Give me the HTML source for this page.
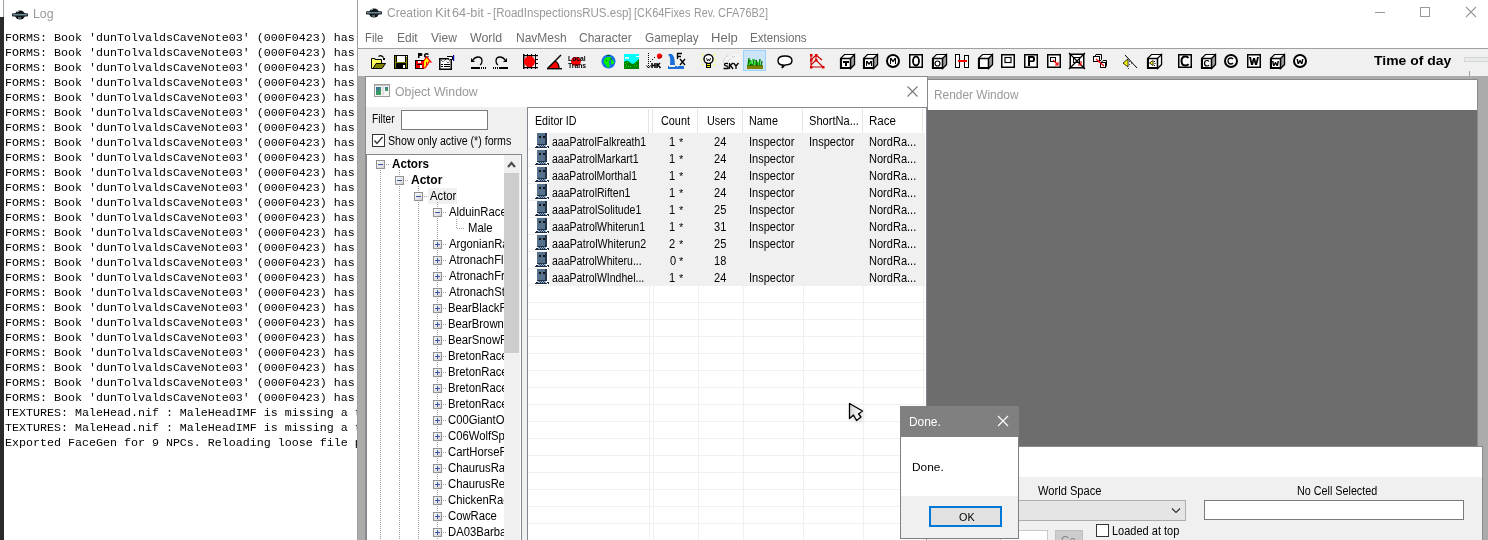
<!DOCTYPE html>
<html><head><meta charset="utf-8"><style>
html,body{margin:0;padding:0;}
body{width:1488px;height:540px;overflow:hidden;position:relative;background:#ababab;font-family:"Liberation Sans",sans-serif;}
.a{position:absolute;}
.t{position:absolute;white-space:pre;line-height:1;}
#logtxt{position:absolute;left:5px;top:31px;will-change:transform;font-family:"Liberation Mono",monospace;font-size:11.67px;line-height:15px;color:#000;white-space:pre;margin:0;}
</style></head><body>
<div class="a" style="left:0;top:0;width:1488px;height:540px;overflow:hidden;will-change:transform">
<div class="a" style="left:0;top:0;width:357px;height:540px;background:#fff;overflow:hidden">
<div class="a" style="left:0px;top:17px;width:4px;height:523px;background:#2b2b2b;"></div>
<div class="a" style="left:3px;top:0px;width:1px;height:17px;background:#a0a0a0;"></div>
<pre id="logtxt">FORMS: Book 'dunTolvaldsCaveNote03' (000F0423) has
FORMS: Book 'dunTolvaldsCaveNote03' (000F0423) has
FORMS: Book 'dunTolvaldsCaveNote03' (000F0423) has
FORMS: Book 'dunTolvaldsCaveNote03' (000F0423) has
FORMS: Book 'dunTolvaldsCaveNote03' (000F0423) has
FORMS: Book 'dunTolvaldsCaveNote03' (000F0423) has
FORMS: Book 'dunTolvaldsCaveNote03' (000F0423) has
FORMS: Book 'dunTolvaldsCaveNote03' (000F0423) has
FORMS: Book 'dunTolvaldsCaveNote03' (000F0423) has
FORMS: Book 'dunTolvaldsCaveNote03' (000F0423) has
FORMS: Book 'dunTolvaldsCaveNote03' (000F0423) has
FORMS: Book 'dunTolvaldsCaveNote03' (000F0423) has
FORMS: Book 'dunTolvaldsCaveNote03' (000F0423) has
FORMS: Book 'dunTolvaldsCaveNote03' (000F0423) has
FORMS: Book 'dunTolvaldsCaveNote03' (000F0423) has
FORMS: Book 'dunTolvaldsCaveNote03' (000F0423) has
FORMS: Book 'dunTolvaldsCaveNote03' (000F0423) has
FORMS: Book 'dunTolvaldsCaveNote03' (000F0423) has
FORMS: Book 'dunTolvaldsCaveNote03' (000F0423) has
FORMS: Book 'dunTolvaldsCaveNote03' (000F0423) has
FORMS: Book 'dunTolvaldsCaveNote03' (000F0423) has
FORMS: Book 'dunTolvaldsCaveNote03' (000F0423) has
FORMS: Book 'dunTolvaldsCaveNote03' (000F0423) has
FORMS: Book 'dunTolvaldsCaveNote03' (000F0423) has
FORMS: Book 'dunTolvaldsCaveNote03' (000F0423) has
TEXTURES: MaleHead.nif : MaleHeadIMF is missing a t
TEXTURES: MaleHead.nif : MaleHeadIMF is missing a t
Exported FaceGen for 9 NPCs. Reloading loose file p</pre>
</div>
<div class="t" style="left:33.00px;top:8px;font-size:12.3px;color:#999;">Log</div>
<div class="a" style="left:357px;top:0px;width:1px;height:540px;background:#a0a0a0;"></div>
<div class="a" style="left:358px;top:0px;width:1130px;height:48px;background:#fff;"></div>
<div class="a" style="left:358px;top:48px;width:1130px;height:1px;background:#a0a0a0;"></div>
<div class="a" style="left:358px;top:49px;width:1130px;height:27px;background:#f0f0f0;"></div>
<div class="t" style="left:387.02px;top:7px;font-size:12.3px;color:#999;transform:scaleX(0.9778);transform-origin:0 0;">Creation</div>
<div class="t" style="left:434.92px;top:7px;font-size:12.3px;color:#999;transform:scaleX(1.0769);transform-origin:0 0;">Kit</div>
<div class="t" style="left:451.97px;top:7px;font-size:12.3px;color:#999;transform:scaleX(1.0333);transform-origin:0 0;">64-bit</div>
<div class="t" style="left:487.00px;top:7px;font-size:12.3px;color:#999;">-</div>
<div class="t" style="left:493.06px;top:7px;font-size:12.3px;color:#999;transform:scaleX(0.9384);transform-origin:0 0;">[RoadInspectionsRUS.esp]</div>
<div class="t" style="left:634.11px;top:7px;font-size:12.3px;color:#999;transform:scaleX(0.8871);transform-origin:0 0;">[CK64Fixes</div>
<div class="t" style="left:694.13px;top:7px;font-size:12.3px;color:#999;transform:scaleX(0.8696);transform-origin:0 0;">Rev.</div>
<div class="t" style="left:718.11px;top:7px;font-size:12.3px;color:#999;transform:scaleX(0.8909);transform-origin:0 0;">CFA76B2]</div>
<div class="t" style="left:365.06px;top:32px;font-size:12px;color:#6d6d6d;transform:scaleX(0.9444);transform-origin:0 0;">File</div>
<div class="t" style="left:397.00px;top:32px;font-size:12px;color:#6d6d6d;">Edit</div>
<div class="t" style="left:431.00px;top:32px;font-size:12px;color:#6d6d6d;">View</div>
<div class="t" style="left:470.00px;top:32px;font-size:12px;color:#6d6d6d;transform:scaleX(1.0323);transform-origin:0 0;">World</div>
<div class="t" style="left:516.00px;top:32px;font-size:12px;color:#6d6d6d;">NavMesh</div>
<div class="t" style="left:579.00px;top:32px;font-size:12px;color:#6d6d6d;">Character</div>
<div class="t" style="left:645.02px;top:32px;font-size:12px;color:#6d6d6d;transform:scaleX(0.9815);transform-origin:0 0;">Gameplay</div>
<div class="t" style="left:710.91px;top:32px;font-size:12px;color:#6d6d6d;transform:scaleX(1.0870);transform-origin:0 0;">Help</div>
<div class="t" style="left:750.04px;top:32px;font-size:12px;color:#6d6d6d;transform:scaleX(0.9649);transform-origin:0 0;">Extensions</div>
<div class="t" style="left:1374.00px;top:54px;font-size:13.6px;font-weight:bold;color:#000;transform:scaleX(1.0267);transform-origin:0 0;">Time of day</div>
<svg class="a" style="left:0;top:0" width="1488" height="80"><g transform="translate(371,55)"><path d="M0.5 3.5 H4 V4.5 H10.5 V13.5 H0.5 Z" fill="#ffff60" stroke="#000"/><path d="M2 13.5 L5 8.5 H14.5 L11 13.5 Z" fill="#808000" stroke="#000"/><path d="M7.5 1.5 Q10 -0.5 12.5 2.5" fill="none" stroke="#000" stroke-width="1.2"/><rect x="12" y="3" width="2" height="2" fill="#000"/></g><g transform="translate(394,55)"><rect x="0" y="0" width="14" height="14" fill="#000"/><rect x="1" y="1" width="1" height="12" fill="#808000"/><rect x="12" y="2" width="1" height="11" fill="#808000"/><rect x="3" y="1" width="8" height="6" fill="#fff"/><rect x="1" y="7" width="12" height="1" fill="#808000"/><rect x="9" y="10" width="2" height="3" fill="#fff"/><rect x="12" y="1" width="1" height="1" fill="#fff"/></g><g transform="translate(415,52)"><path d="M3 1 H6 Q7.5 1 7.5 2.5 Q7.5 4 6 4 H4.5 V6 H3 Z" fill="#000"/><path d="M14 2 Q13 1 11.5 1 Q9 1 9 3.5 Q9 6 11.5 6 Q13 6 14 5 L13 4 Q12.5 4.5 11.5 4.5 Q10.5 4.5 10.5 3.5 Q10.5 2.5 11.5 2.5 Q12.5 2.5 13 3Z" fill="#000"/><rect x="0" y="8" width="9" height="9" fill="#000"/><rect x="1" y="9" width="7" height="7" fill="#f00"/><rect x="3" y="9" width="3" height="2" fill="#fff"/><rect x="2" y="12" width="5" height="1" fill="#000"/><rect x="5" y="13" width="2" height="3" fill="#fff"/><path d="M8.5 9.5 L11.5 5 L16 10 L13.5 10 L13 12 L10 16 L8.5 16 Z" fill="#ff0" stroke="#f00" stroke-width="1.2"/><path d="M11.5 10 V13" stroke="#f00"/></g><g transform="translate(439,55)"><rect x="0.75" y="3.75" width="11.5" height="10.5" fill="#fff" stroke="#000" stroke-width="1.5"/><path d="M2 5 L3 6 L4 7 L5 6 L6 5 L7 4 L8 3 L9 4 L10 5 L11 6 L10 7 L9 8 L8 7 L7 6" fill="none" stroke="#000" stroke-width="1" stroke-dasharray="1,1"/><path d="M8 1.5 H13 Q14.5 3 13 4.5 H11" fill="#fff" stroke="#000" stroke-width="1.2"/><rect x="14" y="0" width="1.2" height="6" fill="#00a"/><rect x="2" y="9" width="2" height="1" fill="#000"/><rect x="5" y="9" width="6" height="1" fill="#000"/><rect x="2" y="11" width="2" height="1" fill="#000"/><rect x="5" y="11" width="6" height="1" fill="#000"/></g><g transform="translate(470,56)"><path d="M3 4 Q5 1 8 1 Q12 1 12 5 Q12 8 10 9" fill="none" stroke="#000" stroke-width="1.3"/><path d="M1 2 V6 H5 Z" fill="#000"/><rect x="1" y="11" width="9" height="2" fill="#000"/><rect x="11" y="11" width="1" height="2" fill="#000"/><rect x="13" y="11" width="1" height="2" fill="#000"/><rect x="15" y="11" width="1" height="2" fill="#000"/></g><g transform="translate(493,56)"><path d="M12 4 Q10 1 7 1 Q3 1 3 5 Q3 8 5 9" fill="none" stroke="#000" stroke-width="1.3"/><path d="M14 2 V6 H10 Z" fill="#000"/><rect x="0" y="11" width="1" height="2" fill="#000"/><rect x="2" y="11" width="1" height="2" fill="#000"/><rect x="4" y="11" width="1" height="2" fill="#000"/><rect x="6" y="11" width="9" height="2" fill="#000"/></g><g transform="translate(523,54)"><rect x="0" y="0" width="1.5" height="15" fill="#000"/><rect x="0" y="1" width="15" height="1.2" fill="#000"/><rect x="0" y="13" width="15" height="1.2" fill="#000"/><rect x="4" y="0" width="1" height="15" fill="#000"/><rect x="8" y="0" width="1" height="15" fill="#000"/><rect x="12" y="0" width="1" height="15" fill="#000"/><rect x="12" y="5" width="3" height="1" fill="#000"/><rect x="12" y="9" width="3" height="1" fill="#000"/><circle cx="6.5" cy="7.5" r="5.5" fill="#f00"/></g><g transform="translate(547,54)"><path d="M1 14 L8 7 Q12 9 12 14 Z" fill="#f00"/><path d="M0.5 14.5 L14 1" stroke="#000" stroke-width="1.4"/><path d="M8 7 Q12 9 12 14" fill="none" stroke="#000" stroke-width="1.2"/><rect x="0" y="14" width="15" height="1.4" fill="#000"/></g><g transform="translate(568,55)"><ellipse cx="8" cy="6.5" rx="5" ry="4.5" fill="#f00"/><text x="0" y="6" font-family="Liberation Sans" font-size="6.8" font-weight="bold" fill="#000">Local</text><text x="0" y="12.5" font-family="Liberation Sans" font-size="6.8" font-weight="bold" fill="#000">Trans</text></g><g transform="translate(601,54)"><circle cx="7.5" cy="7.5" r="7" fill="#1a70e8"/><path d="M3 6 Q4 3 7 3 L10 3 Q11 5 9 6 Q7 7 8 9 Q10 12 7 14 Q5 12 4 10 Q2 9 3 6Z" fill="#00f000"/><path d="M10 5 Q13 6 13 9 Q12 11 10 10 Z" fill="#00f000"/><rect x="9.5" y="4" width="1" height="2" fill="#006000"/><rect x="5" y="6" width="1" height="1" fill="#006000"/><rect x="6" y="1" width="3" height="1" fill="#006000"/></g><g transform="translate(624,54)"><rect x="0" y="0" width="15" height="15" fill="#00ffff"/><path d="M0 15 V8 Q3 6 5 7.5 Q8 10 9 10 Q12 8 15 5 V15 Z" fill="#008000"/><g fill="#00f000"><rect x="1" y="9" width="1" height="1"/><rect x="3" y="8" width="1" height="1"/><rect x="2" y="11" width="1" height="1"/><rect x="1" y="13" width="1" height="1"/><rect x="4" y="12" width="1" height="1"/><rect x="6" y="12" width="1" height="1"/><rect x="11" y="9" width="1" height="1"/><rect x="12" y="11" width="1" height="1"/><rect x="13" y="7" width="1" height="1"/><rect x="10" y="11" width="1" height="1"/></g><rect x="1" y="3" width="4" height="2" fill="#fff" opacity="0.8"/><rect x="12" y="2" width="3" height="1" fill="#fff"/></g><g transform="translate(646,53)"><path d="M2.5 0 V15" stroke="#000" stroke-dasharray="1,1"/><path d="M0.5 12.5 L2.5 15 L4.5 12.5" fill="none" stroke="#000"/><path d="M4 9 L5 8 M6 7 L7 6 M8 5 L9 4" stroke="#000"/><circle cx="13.5" cy="3" r="2.6" fill="#f00"/><path d="M12 5.5 Q15 5 16 2.5" stroke="#900" fill="none"/><path d="M6 10 V15 M6 12.5 H9 M9 10 V15 M11 10 V15 M11 13 L14 10 M12 12 L14.5 15" stroke="#000" stroke-width="1.5" fill="none"/></g><g transform="translate(668,52)"><path d="M0.5 2 H4 Q6 4 6.5 8 L7 13 H2 Q2.5 9 2 6 Q1.5 4 0.5 3 Z" fill="#1a70d8"/><rect x="0" y="14" width="16" height="3" fill="#1a70d8"/><path d="M1 14.5 H7 M9 14.5 L10 14" stroke="#e8e8e8" stroke-width="1"/><path d="M9.5 7 V1.5 H14 M9.5 4.5 H13" stroke="#000" stroke-width="1.3" fill="none"/><path d="M12 7 L17 13 M17 7 L12 13" stroke="#000" stroke-width="1.3"/></g><g transform="translate(701,53)"><circle cx="7.5" cy="6" r="4.5" fill="#fff" stroke="#000" stroke-width="1.4"/><path d="M5.5 5 L6.5 8 L7.5 6 L8.5 8 L9.5 5" fill="none" stroke="#000" stroke-width="0.8"/><rect x="5" y="10" width="5" height="5" fill="#000"/><rect x="6" y="11" width="3" height="1" fill="#ff0"/><rect x="6" y="13" width="3" height="1" fill="#ff0"/><path d="M1 1 L2 2 M14 1 L13 2 M0 7 H1.5 M13.5 7 H15 M1 12 L2 11 M14 12 L13 11" stroke="#ff0" stroke-width="1.2"/></g><g transform="translate(723,54)"><path d="M1 9 Q0 6 2 4.5 Q3 1.5 6 2 Q8 0 10.5 1.5 Q12 0 14.5 1 Q16 2 15.5 5 V9 Z" fill="#f4f4f4"/><path d="M1 8.5 Q0 6 2 4.5 Q3 1.5 6 2 M5 7 Q6 5 8 5 M9 3 Q11 2 12 3" fill="none" stroke="#b0b0b0" stroke-width="1" stroke-dasharray="1,1"/><path d="M5 9.5 Q1 9 1.5 11 Q2 12 4 12 Q5.5 12.5 5 14.5 H0.5 M6.5 9 V15 M6.5 12 L10 9 M7.5 11.5 L10 15 M10.5 9 L13 12 V15 M15.5 9 L13 12" fill="none" stroke="#000" stroke-width="1.3"/></g><rect x="743.5" y="50.5" width="22" height="20" fill="#cce4f7" stroke="#99d1ff"/><g transform="translate(747,57)"><rect x="0" y="8" width="16" height="4" fill="#808000"/><path d="M1 9 L2 1 M3 9 L3 3 L5 8 M6 9 L7 2 M9 9 L9 3 L11 8 M12 9 L13 2 M14 9 L15 4" stroke="#008000" stroke-width="1.4"/><path d="M2 8 L4 4 M7 8 L8 4 M11 8 L12 5 M4 7 L6 2" stroke="#30e030" stroke-width="1.1"/></g><g transform="translate(777,55)"><path d="M8 10 Q15 10 15 5.5 Q15 1 8 1 Q1 1 1 5.5 Q1 10 6 10 L5 13 Z" fill="#fff" stroke="#000" stroke-width="1.4"/></g><g transform="translate(810,54)"><g stroke="#c00000" stroke-width="1.1" fill="none"><path d="M1 1 V13 H13 L6 6 L1 11"/><path d="M1 6 L6 1 L12 6"/><path d="M6 1 V6"/></g><g fill="#e00000"><rect x="0" y="0" width="2.5" height="2.5"/><rect x="5" y="0" width="2.5" height="2.5"/><rect x="0" y="5" width="2.5" height="2.5"/><rect x="5" y="5" width="2.5" height="2.5"/><rect x="0" y="12" width="2.5" height="2.5"/><rect x="12" y="12" width="2.5" height="2.5"/></g></g><g transform="translate(840,54)"><path d="M4.5 0.5 H14.5 V10.5 L10.5 14.5 H0.5 V4.5 Z" fill="#fff" stroke="#000" stroke-width="1.2"/><path d="M10.5 4.5 L14.5 0.5 V10.5 L10.5 14.5 Z" fill="#a0a0a0" stroke="#000" stroke-width="1.2"/><path d="M0.5 4.5 H10.5 V14.5" fill="none" stroke="#000" stroke-width="1.4"/><rect x="0" y="13" width="11" height="2" fill="#000"/><rect x="0" y="4" width="2" height="11" fill="#000"/><path d="M3 7 H9 V9 H7 V12 H5 V9 H3Z" fill="#000"/></g><g transform="translate(863,54)"><path d="M4.5 0.5 H14.5 V10.5 L10.5 14.5 H0.5 V4.5 Z" fill="#fff" stroke="#000" stroke-width="1.2"/><path d="M10.5 4.5 L14.5 0.5 V10.5 L10.5 14.5 Z" fill="#a0a0a0" stroke="#000" stroke-width="1.2"/><path d="M0.5 4.5 H10.5 V14.5" fill="none" stroke="#000" stroke-width="1.4"/><rect x="0" y="13" width="11" height="2" fill="#000"/><rect x="0" y="4" width="2" height="11" fill="#000"/><path d="M3 12 V7 H4.5 L6 9 L7.5 7 H9 V12 H8 V9 L6 11 L4 9 V12Z" fill="#000"/></g><g transform="translate(886,54)"><circle cx="7" cy="7" r="6" fill="#fff" stroke="#000" stroke-width="2"/><path d="M4 10 V4 H5.5 L7 6.5 L8.5 4 H10 V10 H9 V6 L7 8.5 L5 6 V10Z" fill="#000"/></g><g transform="translate(909,54)"><rect x="0.75" y="0.75" width="12.5" height="12.5" fill="#fff" stroke="#000" stroke-width="1.5"/><ellipse cx="7" cy="7" rx="3" ry="4.5" fill="none" stroke="#000" stroke-width="1.8"/></g><g transform="translate(932,54)"><path d="M4.5 0.5 H14.5 V10.5 L10.5 14.5 H0.5 V4.5 Z" fill="#fff" stroke="#000" stroke-width="1.2"/><path d="M10.5 4.5 L14.5 0.5 V10.5 L10.5 14.5 Z" fill="#a0a0a0" stroke="#000" stroke-width="1.2"/><path d="M0.5 4.5 H10.5 V14.5" fill="none" stroke="#000" stroke-width="1.4"/><rect x="0" y="13" width="11" height="2" fill="#000"/><rect x="0" y="4" width="2" height="11" fill="#000"/><ellipse cx="5.5" cy="9.5" rx="2.5" ry="2.5" fill="none" stroke="#000" stroke-width="1.2"/></g><g transform="translate(955,54)"><rect x="0.5" y="0.5" width="4" height="13" fill="#fff" stroke="#000"/><rect x="9.5" y="1.5" width="4" height="12" fill="#fff" stroke="#000"/><rect x="3" y="6" width="9" height="2" fill="#f00"/></g><g transform="translate(978,54)"><path d="M4.5 0.5 H14.5 V10.5 L10.5 14.5 H0.5 V4.5 Z" fill="#fff" stroke="#000" stroke-width="1.2"/><path d="M10.5 4.5 L14.5 0.5 V10.5 L10.5 14.5 Z" fill="#a0a0a0" stroke="#000" stroke-width="1.2"/><path d="M0.5 4.5 H10.5 V14.5" fill="none" stroke="#000" stroke-width="1.4"/><rect x="0" y="13" width="11" height="2" fill="#000"/><rect x="0" y="4" width="2" height="11" fill="#000"/></g><g transform="translate(1001,54)"><rect x="0.75" y="0.75" width="12.5" height="12.5" fill="#fff" stroke="#000" stroke-width="1.5"/><rect x="4" y="3.5" width="6" height="5" fill="none" stroke="#000" stroke-width="1.2"/></g><g transform="translate(1024,54)"><rect x="0.75" y="0.75" width="12.5" height="12.5" fill="#fff" stroke="#000" stroke-width="1.5"/><path d="M4 12 V2 H9 Q11 2 11 5 Q11 8 9 8 H6 V12 Z M6 4 V6.5 H8.5 Q9 6.5 9 5 Q9 4 8.5 4Z" fill="#000" fill-rule="evenodd"/></g><g transform="translate(1047,54)"><rect x="0.75" y="0.75" width="12.5" height="12.5" fill="#fff" stroke="#000" stroke-width="1.5"/><rect x="3.5" y="3.5" width="5" height="4" fill="none" stroke="#000"/><path d="M6 6 L11 11 M8 11 H11 V8" fill="none" stroke="#f00" stroke-width="1.2"/></g><g transform="translate(1069,53)"><rect x="1.25" y="1.25" width="13.5" height="13.5" fill="#fff" stroke="#000" stroke-width="1.5"/><path d="M0 0 L16 16 M16 0 L0 16" stroke="#000" stroke-width="1.3"/><rect x="4.5" y="4.5" width="6" height="5" fill="none" stroke="#000"/><path d="M12 8 V12 H9" fill="none" stroke="#f00" stroke-width="1.2"/></g><g transform="translate(1093,54)"><rect x="0.5" y="2.5" width="6" height="5" fill="#fff" stroke="#000"/><path d="M2 2.5 L3 0.5 H8.5 V5.5 L6.5 7.5" fill="none" stroke="#000"/><rect x="7.5" y="8.5" width="5" height="5" fill="#fff" stroke="#000"/><path d="M8 8.5 L10 6.5 H13.5 V11.5 L12.5 13.5" fill="none" stroke="#000"/><path d="M3 5 L11 12" stroke="#f00" stroke-width="1.3"/></g><g transform="translate(1123,55)"><path d="M2 0 L14 13" stroke="#000"/><path d="M0 8 L5 4 V12 Z" fill="#ff0" stroke="#000" stroke-width="0.8"/><path d="M6 6 L7 7 M6 10 L7 9 M8 8 H9 M5 13 L6 14" stroke="#000" stroke-dasharray="1,1"/></g><g transform="translate(1147,54)"><path d="M4.5 0.5 H14.5 V10.5 L10.5 14.5 H0.5 V4.5 Z" fill="#fff" stroke="#000" stroke-width="1.2"/><path d="M10.5 4.5 L14.5 0.5 V10.5 L10.5 14.5 Z" fill="#fff" stroke="#000" stroke-width="1.2"/><path d="M0.5 4.5 H10.5 V14.5" fill="none" stroke="#000" stroke-width="1.4"/><rect x="0" y="13" width="11" height="2" fill="#000"/><rect x="0" y="4" width="2" height="11" fill="#000"/><path d="M2.5 9 L6 6.5 V11.5 Z" fill="#ff0" stroke="#000" stroke-width="0.8"/><path d="M7 7 L8 8 M8 9 V10 M7 11 L8 12" stroke="#000"/></g><g transform="translate(1178,54)"><rect x="0.75" y="0.75" width="12.5" height="12.5" fill="#fff" stroke="#000" stroke-width="1.5"/><path d="M10.5 4 Q9.5 2.5 7.5 2.5 Q3.5 2.5 3.5 7 Q3.5 11.5 7.5 11.5 Q9.5 11.5 10.5 10" fill="none" stroke="#000" stroke-width="2"/></g><g transform="translate(1201,54)"><path d="M4.5 0.5 H14.5 V10.5 L10.5 14.5 H0.5 V4.5 Z" fill="#fff" stroke="#000" stroke-width="1.2"/><path d="M10.5 4.5 L14.5 0.5 V10.5 L10.5 14.5 Z" fill="#a0a0a0" stroke="#000" stroke-width="1.2"/><path d="M0.5 4.5 H10.5 V14.5" fill="none" stroke="#000" stroke-width="1.4"/><rect x="0" y="13" width="11" height="2" fill="#000"/><rect x="0" y="4" width="2" height="11" fill="#000"/><path d="M8 7.5 Q7.5 6.5 6 6.5 Q3.5 6.5 3.5 9.25 Q3.5 12 6 12 Q7.5 12 8 11" fill="none" stroke="#000" stroke-width="1.2"/></g><g transform="translate(1224,54)"><circle cx="7" cy="7" r="6" fill="#fff" stroke="#000" stroke-width="2"/><path d="M9 5 Q8 4 7 4 Q4 4 4 7 Q4 10 7 10 Q8 10 9 9" fill="none" stroke="#000" stroke-width="1.3"/></g><g transform="translate(1247,54)"><rect x="0.75" y="0.75" width="12.5" height="12.5" fill="#fff" stroke="#000" stroke-width="1.5"/><path d="M2 3 H4 L5 8 L6 4 H8 L9 8 L10 3 H12 L10 11 H8 L7 7 L6 11 H4 Z" fill="#000"/></g><g transform="translate(1270,54)"><path d="M4.5 0.5 H14.5 V10.5 L10.5 14.5 H0.5 V4.5 Z" fill="#fff" stroke="#000" stroke-width="1.2"/><path d="M10.5 4.5 L14.5 0.5 V10.5 L10.5 14.5 Z" fill="#a0a0a0" stroke="#000" stroke-width="1.2"/><path d="M0.5 4.5 H10.5 V14.5" fill="none" stroke="#000" stroke-width="1.4"/><rect x="0" y="13" width="11" height="2" fill="#000"/><rect x="0" y="4" width="2" height="11" fill="#000"/><path d="M2 7 H3.5 L4 10 L5 8 H6 L7 10 L7.5 7 H9 L8 12 H6.5 L5.5 10 L4.5 12 H3 Z" fill="#000"/></g><g transform="translate(1293,54)"><circle cx="7" cy="7" r="6" fill="#fff" stroke="#000" stroke-width="2"/><path d="M3.5 5 H5 L5.5 8 L6.5 6 H7.5 L8.5 8 L9 5 H10.5 L9.5 10 H8 L7 8 L6 10 H4.5 Z" fill="#000"/></g><rect x="1464.5" y="57.5" width="30" height="4" fill="#e7eaea" stroke="#d6d6d6"/><rect x="1469" y="71" width="1" height="5" fill="#a0a0a0"/></svg>
<div class="a" style="left:365px;top:76px;width:563px;height:464px;background:#8a8a8a;"></div>
<div class="a" style="left:366px;top:77px;width:561px;height:30px;background:#fff;"></div>
<div class="a" style="left:366px;top:107px;width:561px;height:433px;background:#f0f0f0;"></div>
<div class="t" style="left:395.00px;top:86px;font-size:12.3px;color:#999;">Object Window</div>
<div class="t" style="left:372.15px;top:113px;font-size:12px;color:#000;transform:scaleX(0.8462);transform-origin:0 0;">Filter</div>
<div class="a" style="left:401px;top:110px;width:85px;height:18px;border:1px solid #7a7a7a;background:#fff"></div>
<div class="a" style="left:372px;top:134px;width:11px;height:11px;border:1px solid #333;background:#fff"></div>
<svg class="a" style="left:372px;top:134px" width="13" height="13"><path d="M2.5 6.5 L5 9.5 L10.5 3" fill="none" stroke="#333" stroke-width="1.3"/></svg>
<div class="t" style="left:388.12px;top:135px;font-size:12px;color:#000;transform:scaleX(0.8841);transform-origin:0 0;">Show only active (*) forms</div>
<div class="a" style="left:366px;top:154px;width:154px;height:386px;border:1px solid #828790;border-bottom:none;background:#fff"></div>
<div class="a" style="left:367px;top:155px;width:137px;height:385px;overflow:hidden">
<svg class="a" style="left:0;top:0" width="137" height="385" shape-rendering="crispEdges"><defs><linearGradient id="bg" x1="0" y1="0" x2="1" y2="1"><stop offset="0" stop-color="#fff"/><stop offset="1" stop-color="#d0d0d0"/></linearGradient></defs><rect x="61" y="33" width="29" height="16" fill="#f0f0f0"/><g stroke="#a0a0a0" stroke-width="1" stroke-dasharray="1,1"><line x1="13.5" y1="15" x2="13.5" y2="385"/><line x1="32.5" y1="15" x2="32.5" y2="385"/><line x1="51.5" y1="31" x2="51.5" y2="385"/><line x1="70.5" y1="47" x2="70.5" y2="385"/><line x1="89.5" y1="64" x2="89.5" y2="74"/><line x1="90" y1="73.5" x2="98" y2="73.5"/><line x1="19" y1="9.5" x2="23" y2="9.5"/><line x1="38" y1="25.5" x2="42" y2="25.5"/><line x1="57" y1="41.5" x2="61" y2="41.5"/><line x1="76" y1="57.5" x2="80" y2="57.5"/><line x1="76" y1="89.5" x2="80" y2="89.5"/><line x1="76" y1="105.5" x2="80" y2="105.5"/><line x1="76" y1="121.5" x2="80" y2="121.5"/><line x1="76" y1="137.5" x2="80" y2="137.5"/><line x1="76" y1="153.5" x2="80" y2="153.5"/><line x1="76" y1="169.5" x2="80" y2="169.5"/><line x1="76" y1="185.5" x2="80" y2="185.5"/><line x1="76" y1="201.5" x2="80" y2="201.5"/><line x1="76" y1="217.5" x2="80" y2="217.5"/><line x1="76" y1="233.5" x2="80" y2="233.5"/><line x1="76" y1="249.5" x2="80" y2="249.5"/><line x1="76" y1="265.5" x2="80" y2="265.5"/><line x1="76" y1="281.5" x2="80" y2="281.5"/><line x1="76" y1="297.5" x2="80" y2="297.5"/><line x1="76" y1="313.5" x2="80" y2="313.5"/><line x1="76" y1="329.5" x2="80" y2="329.5"/><line x1="76" y1="345.5" x2="80" y2="345.5"/><line x1="76" y1="361.5" x2="80" y2="361.5"/><line x1="76" y1="377.5" x2="80" y2="377.5"/></g><rect x="9.5" y="5.5" width="8" height="8" rx="1" fill="url(#bg)" stroke="#919191"/><rect x="11" y="9" width="5" height="1" fill="#3a54a4"/><rect x="28.5" y="21.5" width="8" height="8" rx="1" fill="url(#bg)" stroke="#919191"/><rect x="30" y="25" width="5" height="1" fill="#3a54a4"/><rect x="47.5" y="37.5" width="8" height="8" rx="1" fill="url(#bg)" stroke="#919191"/><rect x="49" y="41" width="5" height="1" fill="#3a54a4"/><rect x="66.5" y="53.5" width="8" height="8" rx="1" fill="url(#bg)" stroke="#919191"/><rect x="68" y="57" width="5" height="1" fill="#3a54a4"/><rect x="66.5" y="85.5" width="8" height="8" rx="1" fill="url(#bg)" stroke="#919191"/><rect x="68" y="89" width="5" height="1" fill="#3a54a4"/><rect x="70" y="87" width="1" height="5" fill="#3a54a4"/><rect x="66.5" y="101.5" width="8" height="8" rx="1" fill="url(#bg)" stroke="#919191"/><rect x="68" y="105" width="5" height="1" fill="#3a54a4"/><rect x="70" y="103" width="1" height="5" fill="#3a54a4"/><rect x="66.5" y="117.5" width="8" height="8" rx="1" fill="url(#bg)" stroke="#919191"/><rect x="68" y="121" width="5" height="1" fill="#3a54a4"/><rect x="70" y="119" width="1" height="5" fill="#3a54a4"/><rect x="66.5" y="133.5" width="8" height="8" rx="1" fill="url(#bg)" stroke="#919191"/><rect x="68" y="137" width="5" height="1" fill="#3a54a4"/><rect x="70" y="135" width="1" height="5" fill="#3a54a4"/><rect x="66.5" y="149.5" width="8" height="8" rx="1" fill="url(#bg)" stroke="#919191"/><rect x="68" y="153" width="5" height="1" fill="#3a54a4"/><rect x="70" y="151" width="1" height="5" fill="#3a54a4"/><rect x="66.5" y="165.5" width="8" height="8" rx="1" fill="url(#bg)" stroke="#919191"/><rect x="68" y="169" width="5" height="1" fill="#3a54a4"/><rect x="70" y="167" width="1" height="5" fill="#3a54a4"/><rect x="66.5" y="181.5" width="8" height="8" rx="1" fill="url(#bg)" stroke="#919191"/><rect x="68" y="185" width="5" height="1" fill="#3a54a4"/><rect x="70" y="183" width="1" height="5" fill="#3a54a4"/><rect x="66.5" y="197.5" width="8" height="8" rx="1" fill="url(#bg)" stroke="#919191"/><rect x="68" y="201" width="5" height="1" fill="#3a54a4"/><rect x="70" y="199" width="1" height="5" fill="#3a54a4"/><rect x="66.5" y="213.5" width="8" height="8" rx="1" fill="url(#bg)" stroke="#919191"/><rect x="68" y="217" width="5" height="1" fill="#3a54a4"/><rect x="70" y="215" width="1" height="5" fill="#3a54a4"/><rect x="66.5" y="229.5" width="8" height="8" rx="1" fill="url(#bg)" stroke="#919191"/><rect x="68" y="233" width="5" height="1" fill="#3a54a4"/><rect x="70" y="231" width="1" height="5" fill="#3a54a4"/><rect x="66.5" y="245.5" width="8" height="8" rx="1" fill="url(#bg)" stroke="#919191"/><rect x="68" y="249" width="5" height="1" fill="#3a54a4"/><rect x="70" y="247" width="1" height="5" fill="#3a54a4"/><rect x="66.5" y="261.5" width="8" height="8" rx="1" fill="url(#bg)" stroke="#919191"/><rect x="68" y="265" width="5" height="1" fill="#3a54a4"/><rect x="70" y="263" width="1" height="5" fill="#3a54a4"/><rect x="66.5" y="277.5" width="8" height="8" rx="1" fill="url(#bg)" stroke="#919191"/><rect x="68" y="281" width="5" height="1" fill="#3a54a4"/><rect x="70" y="279" width="1" height="5" fill="#3a54a4"/><rect x="66.5" y="293.5" width="8" height="8" rx="1" fill="url(#bg)" stroke="#919191"/><rect x="68" y="297" width="5" height="1" fill="#3a54a4"/><rect x="70" y="295" width="1" height="5" fill="#3a54a4"/><rect x="66.5" y="309.5" width="8" height="8" rx="1" fill="url(#bg)" stroke="#919191"/><rect x="68" y="313" width="5" height="1" fill="#3a54a4"/><rect x="70" y="311" width="1" height="5" fill="#3a54a4"/><rect x="66.5" y="325.5" width="8" height="8" rx="1" fill="url(#bg)" stroke="#919191"/><rect x="68" y="329" width="5" height="1" fill="#3a54a4"/><rect x="70" y="327" width="1" height="5" fill="#3a54a4"/><rect x="66.5" y="341.5" width="8" height="8" rx="1" fill="url(#bg)" stroke="#919191"/><rect x="68" y="345" width="5" height="1" fill="#3a54a4"/><rect x="70" y="343" width="1" height="5" fill="#3a54a4"/><rect x="66.5" y="357.5" width="8" height="8" rx="1" fill="url(#bg)" stroke="#919191"/><rect x="68" y="361" width="5" height="1" fill="#3a54a4"/><rect x="70" y="359" width="1" height="5" fill="#3a54a4"/><rect x="66.5" y="373.5" width="8" height="8" rx="1" fill="url(#bg)" stroke="#919191"/><rect x="68" y="377" width="5" height="1" fill="#3a54a4"/><rect x="70" y="375" width="1" height="5" fill="#3a54a4"/></svg>
<div class="t" style="left:25.00px;top:3px;font-size:12px;font-weight:bold;color:#000;transform:scaleX(0.9737);transform-origin:0 0;">Actors</div>
<div class="t" style="left:44.00px;top:19px;font-size:12px;font-weight:bold;color:#000;">Actor</div>
<div class="t" style="left:63.00px;top:35px;font-size:12px;color:#000;transform:scaleX(0.9400);transform-origin:0 0;">Actor</div>
<div class="t" style="left:82.00px;top:51px;font-size:12px;color:#000;transform:scaleX(0.9400);transform-origin:0 0;">AlduinRace</div>
<div class="t" style="left:101.06px;top:67px;font-size:12px;color:#000;transform:scaleX(0.9400);transform-origin:0 0;">Male</div>
<div class="t" style="left:82.00px;top:83px;font-size:12px;color:#000;transform:scaleX(0.9400);transform-origin:0 0;">ArgonianRace</div>
<div class="t" style="left:82.00px;top:99px;font-size:12px;color:#000;transform:scaleX(0.9400);transform-origin:0 0;">AtronachFlameRace</div>
<div class="t" style="left:82.00px;top:115px;font-size:12px;color:#000;transform:scaleX(0.9400);transform-origin:0 0;">AtronachFrostRace</div>
<div class="t" style="left:82.00px;top:131px;font-size:12px;color:#000;transform:scaleX(0.9400);transform-origin:0 0;">AtronachStormRace</div>
<div class="t" style="left:81.06px;top:147px;font-size:12px;color:#000;transform:scaleX(0.9400);transform-origin:0 0;">BearBlackRace</div>
<div class="t" style="left:81.06px;top:163px;font-size:12px;color:#000;transform:scaleX(0.9400);transform-origin:0 0;">BearBrownRace</div>
<div class="t" style="left:81.06px;top:179px;font-size:12px;color:#000;transform:scaleX(0.9400);transform-origin:0 0;">BearSnowRace</div>
<div class="t" style="left:81.06px;top:195px;font-size:12px;color:#000;transform:scaleX(0.9400);transform-origin:0 0;">BretonRace</div>
<div class="t" style="left:81.06px;top:211px;font-size:12px;color:#000;transform:scaleX(0.9400);transform-origin:0 0;">BretonRaceChild</div>
<div class="t" style="left:81.06px;top:227px;font-size:12px;color:#000;transform:scaleX(0.9400);transform-origin:0 0;">BretonRaceVampire</div>
<div class="t" style="left:81.06px;top:243px;font-size:12px;color:#000;transform:scaleX(0.9400);transform-origin:0 0;">BretonRaceChildVampire</div>
<div class="t" style="left:81.06px;top:259px;font-size:12px;color:#000;transform:scaleX(0.9400);transform-origin:0 0;">C00GiantOutsideWhiterunRace</div>
<div class="t" style="left:81.06px;top:275px;font-size:12px;color:#000;transform:scaleX(0.9400);transform-origin:0 0;">C06WolfSpiritRace</div>
<div class="t" style="left:81.06px;top:291px;font-size:12px;color:#000;transform:scaleX(0.9400);transform-origin:0 0;">CartHorseRace</div>
<div class="t" style="left:81.06px;top:307px;font-size:12px;color:#000;transform:scaleX(0.9400);transform-origin:0 0;">ChaurusRace</div>
<div class="t" style="left:81.06px;top:323px;font-size:12px;color:#000;transform:scaleX(0.9400);transform-origin:0 0;">ChaurusReaperRace</div>
<div class="t" style="left:81.06px;top:339px;font-size:12px;color:#000;transform:scaleX(0.9400);transform-origin:0 0;">ChickenRace</div>
<div class="t" style="left:81.06px;top:355px;font-size:12px;color:#000;transform:scaleX(0.9400);transform-origin:0 0;">CowRace</div>
<div class="t" style="left:81.06px;top:371px;font-size:12px;color:#000;transform:scaleX(0.9400);transform-origin:0 0;">DA03BarbasDogRace</div>
</div>
<div class="a" style="left:504px;top:155px;width:16px;height:385px;background:#f0f0f0;"></div>
<div class="a" style="left:504px;top:173px;width:15px;height:180px;background:#cdcdcd;"></div>
<svg class="a" style="left:504px;top:155px" width="16" height="17"><path d="M4 12 L7.5 8 L11 12" fill="none" stroke="#505050" stroke-width="2.2"/></svg>
<div class="a" style="left:527px;top:107px;width:398px;height:433px;border:1px solid #828790;border-bottom:none;background:#fff"></div>
<div class="a" style="left:648px;top:109px;width:1px;height:24px;background:#e5e5e5;"></div>
<div class="a" style="left:652px;top:109px;width:1px;height:24px;background:#e5e5e5;"></div>
<div class="a" style="left:697px;top:109px;width:1px;height:24px;background:#e5e5e5;"></div>
<div class="a" style="left:742px;top:109px;width:1px;height:24px;background:#e5e5e5;"></div>
<div class="a" style="left:802px;top:109px;width:1px;height:24px;background:#e5e5e5;"></div>
<div class="a" style="left:862px;top:109px;width:1px;height:24px;background:#e5e5e5;"></div>
<div class="a" style="left:922px;top:109px;width:1px;height:24px;background:#e5e5e5;"></div>
<div class="t" style="left:535.11px;top:115px;font-size:12px;color:#000;transform:scaleX(0.8889);transform-origin:0 0;">Editor ID</div>
<div class="t" style="left:661.10px;top:115px;font-size:12px;color:#000;transform:scaleX(0.9032);transform-origin:0 0;">Count</div>
<div class="t" style="left:707.10px;top:115px;font-size:12px;color:#000;transform:scaleX(0.9000);transform-origin:0 0;">Users</div>
<div class="t" style="left:749.10px;top:115px;font-size:12px;color:#000;transform:scaleX(0.9032);transform-origin:0 0;">Name</div>
<div class="t" style="left:809.08px;top:115px;font-size:12px;color:#000;transform:scaleX(0.9231);transform-origin:0 0;">ShortNa...</div>
<div class="t" style="left:869.04px;top:115px;font-size:12px;color:#000;transform:scaleX(0.9630);transform-origin:0 0;">Race</div>
<div class="a" style="left:649px;top:133px;width:1px;height:407px;background:#f0f0f0;"></div>
<div class="a" style="left:653px;top:133px;width:1px;height:407px;background:#f0f0f0;"></div>
<div class="a" style="left:698px;top:133px;width:1px;height:407px;background:#f0f0f0;"></div>
<div class="a" style="left:743px;top:133px;width:1px;height:407px;background:#f0f0f0;"></div>
<div class="a" style="left:803px;top:133px;width:1px;height:407px;background:#f0f0f0;"></div>
<div class="a" style="left:863px;top:133px;width:1px;height:407px;background:#f0f0f0;"></div>
<div class="a" style="left:923px;top:133px;width:1px;height:407px;background:#f0f0f0;"></div>
<div class="a" style="left:528px;top:149px;width:397px;height:1px;background:#f0f0f0;"></div>
<div class="a" style="left:528px;top:166px;width:397px;height:1px;background:#f0f0f0;"></div>
<div class="a" style="left:528px;top:183px;width:397px;height:1px;background:#f0f0f0;"></div>
<div class="a" style="left:528px;top:200px;width:397px;height:1px;background:#f0f0f0;"></div>
<div class="a" style="left:528px;top:217px;width:397px;height:1px;background:#f0f0f0;"></div>
<div class="a" style="left:528px;top:234px;width:397px;height:1px;background:#f0f0f0;"></div>
<div class="a" style="left:528px;top:251px;width:397px;height:1px;background:#f0f0f0;"></div>
<div class="a" style="left:528px;top:268px;width:397px;height:1px;background:#f0f0f0;"></div>
<div class="a" style="left:528px;top:285px;width:397px;height:1px;background:#f0f0f0;"></div>
<div class="a" style="left:528px;top:302px;width:397px;height:1px;background:#f0f0f0;"></div>
<div class="a" style="left:528px;top:319px;width:397px;height:1px;background:#f0f0f0;"></div>
<div class="a" style="left:528px;top:336px;width:397px;height:1px;background:#f0f0f0;"></div>
<div class="a" style="left:528px;top:353px;width:397px;height:1px;background:#f0f0f0;"></div>
<div class="a" style="left:528px;top:370px;width:397px;height:1px;background:#f0f0f0;"></div>
<div class="a" style="left:528px;top:387px;width:397px;height:1px;background:#f0f0f0;"></div>
<div class="a" style="left:528px;top:404px;width:397px;height:1px;background:#f0f0f0;"></div>
<div class="a" style="left:528px;top:421px;width:397px;height:1px;background:#f0f0f0;"></div>
<div class="a" style="left:528px;top:438px;width:397px;height:1px;background:#f0f0f0;"></div>
<div class="a" style="left:528px;top:455px;width:397px;height:1px;background:#f0f0f0;"></div>
<div class="a" style="left:528px;top:472px;width:397px;height:1px;background:#f0f0f0;"></div>
<div class="a" style="left:528px;top:489px;width:397px;height:1px;background:#f0f0f0;"></div>
<div class="a" style="left:528px;top:506px;width:397px;height:1px;background:#f0f0f0;"></div>
<div class="a" style="left:528px;top:523px;width:397px;height:1px;background:#f0f0f0;"></div>
<div class="a" style="left:528px;top:540px;width:397px;height:1px;background:#f0f0f0;"></div>
<div class="a" style="left:549px;top:133px;width:376px;height:152px;background:#f0f0f0;"></div>
<div class="t" style="left:552.00px;top:136px;font-size:12px;color:#000;transform:scaleX(0.8704);transform-origin:0 0;">aaaPatrolFalkreath1</div>
<div class="t" style="left:669.08px;top:136px;font-size:12px;color:#000;transform:scaleX(0.9200);transform-origin:0 0;">1</div>
<div class="t" style="left:679.00px;top:137px;font-size:11px;color:#000;">*</div>
<div class="t" style="left:714.08px;top:136px;font-size:12px;color:#000;transform:scaleX(0.9200);transform-origin:0 0;">24</div>
<div class="t" style="left:749.08px;top:136px;font-size:12px;color:#000;transform:scaleX(0.9200);transform-origin:0 0;">Inspector</div>
<div class="t" style="left:809.08px;top:136px;font-size:12px;color:#000;transform:scaleX(0.9200);transform-origin:0 0;">Inspector</div>
<div class="t" style="left:869.08px;top:136px;font-size:12px;color:#000;transform:scaleX(0.9200);transform-origin:0 0;">NordRa...</div>
<svg class="a" style="left:535px;top:133px" width="15" height="16" shape-rendering="crispEdges"><rect x="2" y="0" width="10" height="11" fill="#56718c"/><rect x="10" y="0" width="2" height="11" fill="#22364a"/><rect x="4" y="3" width="2" height="2" fill="#111"/><rect x="8" y="3" width="2" height="2" fill="#111"/><rect x="2" y="11" width="10" height="1" fill="#22364a"/><rect x="3" y="12" width="8" height="2" fill="#9ab0c8"/><rect x="4" y="12" width="1" height="1" fill="#2a4060"/><rect x="6" y="12" width="1" height="1" fill="#2a4060"/><rect x="8" y="12" width="1" height="1" fill="#2a4060"/><rect x="5" y="13" width="1" height="1" fill="#2a4060"/><rect x="7" y="13" width="1" height="1" fill="#2a4060"/><rect x="9" y="13" width="1" height="1" fill="#2a4060"/><rect x="0" y="14" width="2" height="1" fill="#1a2a40"/><rect x="1" y="13" width="2" height="1" fill="#1a2a40"/><rect x="2" y="14" width="10" height="1" fill="#1a2a40"/><rect x="12" y="13" width="2" height="1" fill="#1a2a40"/><rect x="13" y="14" width="1" height="1" fill="#1a2a40"/></svg>
<div class="t" style="left:552.00px;top:153px;font-size:12px;color:#000;transform:scaleX(0.8776);transform-origin:0 0;">aaaPatrolMarkart1</div>
<div class="t" style="left:669.08px;top:153px;font-size:12px;color:#000;transform:scaleX(0.9200);transform-origin:0 0;">1</div>
<div class="t" style="left:679.00px;top:154px;font-size:11px;color:#000;">*</div>
<div class="t" style="left:714.08px;top:153px;font-size:12px;color:#000;transform:scaleX(0.9200);transform-origin:0 0;">24</div>
<div class="t" style="left:749.08px;top:153px;font-size:12px;color:#000;transform:scaleX(0.9200);transform-origin:0 0;">Inspector</div>
<div class="t" style="left:869.08px;top:153px;font-size:12px;color:#000;transform:scaleX(0.9200);transform-origin:0 0;">NordRa...</div>
<svg class="a" style="left:535px;top:150px" width="15" height="16" shape-rendering="crispEdges"><rect x="2" y="0" width="10" height="11" fill="#56718c"/><rect x="10" y="0" width="2" height="11" fill="#22364a"/><rect x="4" y="3" width="2" height="2" fill="#111"/><rect x="8" y="3" width="2" height="2" fill="#111"/><rect x="2" y="11" width="10" height="1" fill="#22364a"/><rect x="3" y="12" width="8" height="2" fill="#9ab0c8"/><rect x="4" y="12" width="1" height="1" fill="#2a4060"/><rect x="6" y="12" width="1" height="1" fill="#2a4060"/><rect x="8" y="12" width="1" height="1" fill="#2a4060"/><rect x="5" y="13" width="1" height="1" fill="#2a4060"/><rect x="7" y="13" width="1" height="1" fill="#2a4060"/><rect x="9" y="13" width="1" height="1" fill="#2a4060"/><rect x="0" y="14" width="2" height="1" fill="#1a2a40"/><rect x="1" y="13" width="2" height="1" fill="#1a2a40"/><rect x="2" y="14" width="10" height="1" fill="#1a2a40"/><rect x="12" y="13" width="2" height="1" fill="#1a2a40"/><rect x="13" y="14" width="1" height="1" fill="#1a2a40"/></svg>
<div class="t" style="left:552.00px;top:170px;font-size:12px;color:#000;transform:scaleX(0.8673);transform-origin:0 0;">aaaPatrolMorthal1</div>
<div class="t" style="left:669.08px;top:170px;font-size:12px;color:#000;transform:scaleX(0.9200);transform-origin:0 0;">1</div>
<div class="t" style="left:679.00px;top:171px;font-size:11px;color:#000;">*</div>
<div class="t" style="left:714.08px;top:170px;font-size:12px;color:#000;transform:scaleX(0.9200);transform-origin:0 0;">24</div>
<div class="t" style="left:749.08px;top:170px;font-size:12px;color:#000;transform:scaleX(0.9200);transform-origin:0 0;">Inspector</div>
<div class="t" style="left:869.08px;top:170px;font-size:12px;color:#000;transform:scaleX(0.9200);transform-origin:0 0;">NordRa...</div>
<svg class="a" style="left:535px;top:167px" width="15" height="16" shape-rendering="crispEdges"><rect x="2" y="0" width="10" height="11" fill="#56718c"/><rect x="10" y="0" width="2" height="11" fill="#22364a"/><rect x="4" y="3" width="2" height="2" fill="#111"/><rect x="8" y="3" width="2" height="2" fill="#111"/><rect x="2" y="11" width="10" height="1" fill="#22364a"/><rect x="3" y="12" width="8" height="2" fill="#9ab0c8"/><rect x="4" y="12" width="1" height="1" fill="#2a4060"/><rect x="6" y="12" width="1" height="1" fill="#2a4060"/><rect x="8" y="12" width="1" height="1" fill="#2a4060"/><rect x="5" y="13" width="1" height="1" fill="#2a4060"/><rect x="7" y="13" width="1" height="1" fill="#2a4060"/><rect x="9" y="13" width="1" height="1" fill="#2a4060"/><rect x="0" y="14" width="2" height="1" fill="#1a2a40"/><rect x="1" y="13" width="2" height="1" fill="#1a2a40"/><rect x="2" y="14" width="10" height="1" fill="#1a2a40"/><rect x="12" y="13" width="2" height="1" fill="#1a2a40"/><rect x="13" y="14" width="1" height="1" fill="#1a2a40"/></svg>
<div class="t" style="left:552.00px;top:187px;font-size:12px;color:#000;transform:scaleX(0.8764);transform-origin:0 0;">aaaPatrolRiften1</div>
<div class="t" style="left:669.08px;top:187px;font-size:12px;color:#000;transform:scaleX(0.9200);transform-origin:0 0;">1</div>
<div class="t" style="left:679.00px;top:188px;font-size:11px;color:#000;">*</div>
<div class="t" style="left:714.08px;top:187px;font-size:12px;color:#000;transform:scaleX(0.9200);transform-origin:0 0;">24</div>
<div class="t" style="left:749.08px;top:187px;font-size:12px;color:#000;transform:scaleX(0.9200);transform-origin:0 0;">Inspector</div>
<div class="t" style="left:869.08px;top:187px;font-size:12px;color:#000;transform:scaleX(0.9200);transform-origin:0 0;">NordRa...</div>
<svg class="a" style="left:535px;top:184px" width="15" height="16" shape-rendering="crispEdges"><rect x="2" y="0" width="10" height="11" fill="#56718c"/><rect x="10" y="0" width="2" height="11" fill="#22364a"/><rect x="4" y="3" width="2" height="2" fill="#111"/><rect x="8" y="3" width="2" height="2" fill="#111"/><rect x="2" y="11" width="10" height="1" fill="#22364a"/><rect x="3" y="12" width="8" height="2" fill="#9ab0c8"/><rect x="4" y="12" width="1" height="1" fill="#2a4060"/><rect x="6" y="12" width="1" height="1" fill="#2a4060"/><rect x="8" y="12" width="1" height="1" fill="#2a4060"/><rect x="5" y="13" width="1" height="1" fill="#2a4060"/><rect x="7" y="13" width="1" height="1" fill="#2a4060"/><rect x="9" y="13" width="1" height="1" fill="#2a4060"/><rect x="0" y="14" width="2" height="1" fill="#1a2a40"/><rect x="1" y="13" width="2" height="1" fill="#1a2a40"/><rect x="2" y="14" width="10" height="1" fill="#1a2a40"/><rect x="12" y="13" width="2" height="1" fill="#1a2a40"/><rect x="13" y="14" width="1" height="1" fill="#1a2a40"/></svg>
<div class="t" style="left:552.00px;top:204px;font-size:12px;color:#000;transform:scaleX(0.8812);transform-origin:0 0;">aaaPatrolSolitude1</div>
<div class="t" style="left:669.08px;top:204px;font-size:12px;color:#000;transform:scaleX(0.9200);transform-origin:0 0;">1</div>
<div class="t" style="left:679.00px;top:205px;font-size:11px;color:#000;">*</div>
<div class="t" style="left:714.08px;top:204px;font-size:12px;color:#000;transform:scaleX(0.9200);transform-origin:0 0;">25</div>
<div class="t" style="left:749.08px;top:204px;font-size:12px;color:#000;transform:scaleX(0.9200);transform-origin:0 0;">Inspector</div>
<div class="t" style="left:869.08px;top:204px;font-size:12px;color:#000;transform:scaleX(0.9200);transform-origin:0 0;">NordRa...</div>
<svg class="a" style="left:535px;top:201px" width="15" height="16" shape-rendering="crispEdges"><rect x="2" y="0" width="10" height="11" fill="#56718c"/><rect x="10" y="0" width="2" height="11" fill="#22364a"/><rect x="4" y="3" width="2" height="2" fill="#111"/><rect x="8" y="3" width="2" height="2" fill="#111"/><rect x="2" y="11" width="10" height="1" fill="#22364a"/><rect x="3" y="12" width="8" height="2" fill="#9ab0c8"/><rect x="4" y="12" width="1" height="1" fill="#2a4060"/><rect x="6" y="12" width="1" height="1" fill="#2a4060"/><rect x="8" y="12" width="1" height="1" fill="#2a4060"/><rect x="5" y="13" width="1" height="1" fill="#2a4060"/><rect x="7" y="13" width="1" height="1" fill="#2a4060"/><rect x="9" y="13" width="1" height="1" fill="#2a4060"/><rect x="0" y="14" width="2" height="1" fill="#1a2a40"/><rect x="1" y="13" width="2" height="1" fill="#1a2a40"/><rect x="2" y="14" width="10" height="1" fill="#1a2a40"/><rect x="12" y="13" width="2" height="1" fill="#1a2a40"/><rect x="13" y="14" width="1" height="1" fill="#1a2a40"/></svg>
<div class="t" style="left:552.00px;top:221px;font-size:12px;color:#000;transform:scaleX(0.8774);transform-origin:0 0;">aaaPatrolWhiterun1</div>
<div class="t" style="left:669.08px;top:221px;font-size:12px;color:#000;transform:scaleX(0.9200);transform-origin:0 0;">1</div>
<div class="t" style="left:679.00px;top:222px;font-size:11px;color:#000;">*</div>
<div class="t" style="left:714.08px;top:221px;font-size:12px;color:#000;transform:scaleX(0.9200);transform-origin:0 0;">31</div>
<div class="t" style="left:749.08px;top:221px;font-size:12px;color:#000;transform:scaleX(0.9200);transform-origin:0 0;">Inspector</div>
<div class="t" style="left:869.08px;top:221px;font-size:12px;color:#000;transform:scaleX(0.9200);transform-origin:0 0;">NordRa...</div>
<svg class="a" style="left:535px;top:218px" width="15" height="16" shape-rendering="crispEdges"><rect x="2" y="0" width="10" height="11" fill="#56718c"/><rect x="10" y="0" width="2" height="11" fill="#22364a"/><rect x="4" y="3" width="2" height="2" fill="#111"/><rect x="8" y="3" width="2" height="2" fill="#111"/><rect x="2" y="11" width="10" height="1" fill="#22364a"/><rect x="3" y="12" width="8" height="2" fill="#9ab0c8"/><rect x="4" y="12" width="1" height="1" fill="#2a4060"/><rect x="6" y="12" width="1" height="1" fill="#2a4060"/><rect x="8" y="12" width="1" height="1" fill="#2a4060"/><rect x="5" y="13" width="1" height="1" fill="#2a4060"/><rect x="7" y="13" width="1" height="1" fill="#2a4060"/><rect x="9" y="13" width="1" height="1" fill="#2a4060"/><rect x="0" y="14" width="2" height="1" fill="#1a2a40"/><rect x="1" y="13" width="2" height="1" fill="#1a2a40"/><rect x="2" y="14" width="10" height="1" fill="#1a2a40"/><rect x="12" y="13" width="2" height="1" fill="#1a2a40"/><rect x="13" y="14" width="1" height="1" fill="#1a2a40"/></svg>
<div class="t" style="left:552.00px;top:238px;font-size:12px;color:#000;transform:scaleX(0.8868);transform-origin:0 0;">aaaPatrolWhiterun2</div>
<div class="t" style="left:669.08px;top:238px;font-size:12px;color:#000;transform:scaleX(0.9200);transform-origin:0 0;">2</div>
<div class="t" style="left:679.00px;top:239px;font-size:11px;color:#000;">*</div>
<div class="t" style="left:714.08px;top:238px;font-size:12px;color:#000;transform:scaleX(0.9200);transform-origin:0 0;">25</div>
<div class="t" style="left:749.08px;top:238px;font-size:12px;color:#000;transform:scaleX(0.9200);transform-origin:0 0;">Inspector</div>
<div class="t" style="left:869.08px;top:238px;font-size:12px;color:#000;transform:scaleX(0.9200);transform-origin:0 0;">NordRa...</div>
<svg class="a" style="left:535px;top:235px" width="15" height="16" shape-rendering="crispEdges"><rect x="2" y="0" width="10" height="11" fill="#56718c"/><rect x="10" y="0" width="2" height="11" fill="#22364a"/><rect x="4" y="3" width="2" height="2" fill="#111"/><rect x="8" y="3" width="2" height="2" fill="#111"/><rect x="2" y="11" width="10" height="1" fill="#22364a"/><rect x="3" y="12" width="8" height="2" fill="#9ab0c8"/><rect x="4" y="12" width="1" height="1" fill="#2a4060"/><rect x="6" y="12" width="1" height="1" fill="#2a4060"/><rect x="8" y="12" width="1" height="1" fill="#2a4060"/><rect x="5" y="13" width="1" height="1" fill="#2a4060"/><rect x="7" y="13" width="1" height="1" fill="#2a4060"/><rect x="9" y="13" width="1" height="1" fill="#2a4060"/><rect x="0" y="14" width="2" height="1" fill="#1a2a40"/><rect x="1" y="13" width="2" height="1" fill="#1a2a40"/><rect x="2" y="14" width="10" height="1" fill="#1a2a40"/><rect x="12" y="13" width="2" height="1" fill="#1a2a40"/><rect x="13" y="14" width="1" height="1" fill="#1a2a40"/></svg>
<div class="t" style="left:552.00px;top:255px;font-size:12px;color:#000;transform:scaleX(0.8725);transform-origin:0 0;">aaaPatrolWhiteru...</div>
<div class="t" style="left:670.00px;top:255px;font-size:12px;color:#000;transform:scaleX(0.9200);transform-origin:0 0;">0</div>
<div class="t" style="left:679.00px;top:256px;font-size:11px;color:#000;">*</div>
<div class="t" style="left:714.08px;top:255px;font-size:12px;color:#000;transform:scaleX(0.9200);transform-origin:0 0;">18</div>
<div class="t" style="left:869.08px;top:255px;font-size:12px;color:#000;transform:scaleX(0.9200);transform-origin:0 0;">NordRa...</div>
<svg class="a" style="left:535px;top:252px" width="15" height="16" shape-rendering="crispEdges"><rect x="2" y="0" width="10" height="11" fill="#56718c"/><rect x="10" y="0" width="2" height="11" fill="#22364a"/><rect x="4" y="3" width="2" height="2" fill="#111"/><rect x="8" y="3" width="2" height="2" fill="#111"/><rect x="2" y="11" width="10" height="1" fill="#22364a"/><rect x="3" y="12" width="8" height="2" fill="#9ab0c8"/><rect x="4" y="12" width="1" height="1" fill="#2a4060"/><rect x="6" y="12" width="1" height="1" fill="#2a4060"/><rect x="8" y="12" width="1" height="1" fill="#2a4060"/><rect x="5" y="13" width="1" height="1" fill="#2a4060"/><rect x="7" y="13" width="1" height="1" fill="#2a4060"/><rect x="9" y="13" width="1" height="1" fill="#2a4060"/><rect x="0" y="14" width="2" height="1" fill="#1a2a40"/><rect x="1" y="13" width="2" height="1" fill="#1a2a40"/><rect x="2" y="14" width="10" height="1" fill="#1a2a40"/><rect x="12" y="13" width="2" height="1" fill="#1a2a40"/><rect x="13" y="14" width="1" height="1" fill="#1a2a40"/></svg>
<div class="t" style="left:552.00px;top:272px;font-size:12px;color:#000;transform:scaleX(0.8750);transform-origin:0 0;">aaaPatrolWIndhel...</div>
<div class="t" style="left:669.08px;top:272px;font-size:12px;color:#000;transform:scaleX(0.9200);transform-origin:0 0;">1</div>
<div class="t" style="left:679.00px;top:273px;font-size:11px;color:#000;">*</div>
<div class="t" style="left:714.08px;top:272px;font-size:12px;color:#000;transform:scaleX(0.9200);transform-origin:0 0;">24</div>
<div class="t" style="left:749.08px;top:272px;font-size:12px;color:#000;transform:scaleX(0.9200);transform-origin:0 0;">Inspector</div>
<div class="t" style="left:869.08px;top:272px;font-size:12px;color:#000;transform:scaleX(0.9200);transform-origin:0 0;">NordRa...</div>
<svg class="a" style="left:535px;top:269px" width="15" height="16" shape-rendering="crispEdges"><rect x="2" y="0" width="10" height="11" fill="#56718c"/><rect x="10" y="0" width="2" height="11" fill="#22364a"/><rect x="4" y="3" width="2" height="2" fill="#111"/><rect x="8" y="3" width="2" height="2" fill="#111"/><rect x="2" y="11" width="10" height="1" fill="#22364a"/><rect x="3" y="12" width="8" height="2" fill="#9ab0c8"/><rect x="4" y="12" width="1" height="1" fill="#2a4060"/><rect x="6" y="12" width="1" height="1" fill="#2a4060"/><rect x="8" y="12" width="1" height="1" fill="#2a4060"/><rect x="5" y="13" width="1" height="1" fill="#2a4060"/><rect x="7" y="13" width="1" height="1" fill="#2a4060"/><rect x="9" y="13" width="1" height="1" fill="#2a4060"/><rect x="0" y="14" width="2" height="1" fill="#1a2a40"/><rect x="1" y="13" width="2" height="1" fill="#1a2a40"/><rect x="2" y="14" width="10" height="1" fill="#1a2a40"/><rect x="12" y="13" width="2" height="1" fill="#1a2a40"/><rect x="13" y="14" width="1" height="1" fill="#1a2a40"/></svg>
<div class="a" style="left:927px;top:79px;width:551px;height:461px;background:#8a8a8a;"></div>
<div class="a" style="left:928px;top:80px;width:549px;height:30px;background:#fff;"></div>
<div class="a" style="left:927px;top:110px;width:550px;height:336px;background:#6d6d6d;"></div>
<div class="t" style="left:934.03px;top:89px;font-size:12.3px;color:#999;transform:scaleX(0.9655);transform-origin:0 0;">Render Window</div>
<div class="a" style="left:926px;top:446px;width:557px;height:94px;background:#8a8a8a;"></div>
<div class="a" style="left:927px;top:447px;width:555px;height:30px;background:#fff;"></div>
<div class="a" style="left:927px;top:477px;width:555px;height:63px;background:#f0f0f0;"></div>
<div class="t" style="left:1038.00px;top:485px;font-size:12px;color:#000;transform:scaleX(0.9265);transform-origin:0 0;">World Space</div>
<div class="t" style="left:1297.10px;top:485px;font-size:12px;color:#000;transform:scaleX(0.8977);transform-origin:0 0;">No Cell Selected</div>
<div class="a" style="left:1000px;top:500px;width:184px;height:19px;border:1px solid #adadad;background:#e5e5e5"></div>
<svg class="a" style="left:1168px;top:503px" width="16" height="14"><path d="M4 5.5 L8 9.5 L12 5.5" fill="none" stroke="#333" stroke-width="1.2"/></svg>
<div class="a" style="left:1204px;top:500px;width:258px;height:18px;border:1px solid #7a7a7a;background:#fff"></div>
<div class="a" style="left:1096px;top:524px;width:11px;height:11px;border:1px solid #333;background:#fff"></div>
<div class="t" style="left:1112.08px;top:525px;font-size:12px;color:#000;transform:scaleX(0.9167);transform-origin:0 0;">Loaded at top</div>
<div class="a" style="left:1000px;top:530px;width:46px;height:20px;border:1px solid #c8c8c8;background:#fff"></div>
<div class="a" style="left:1055px;top:530px;width:26px;height:20px;border:1px solid #bfbfbf;background:#cccccc"></div>
<div class="t" style="left:1061.08px;top:535px;font-size:12px;color:#838383;transform:scaleX(0.9200);transform-origin:0 0;">Go</div>
<div class="a" style="left:900px;top:406px;width:119px;height:133px;background:#808080;"></div>
<div class="a" style="left:901px;top:437px;width:117px;height:59px;background:#fff;"></div>
<div class="a" style="left:901px;top:496px;width:117px;height:42px;background:#f0f0f0;"></div>
<div class="t" style="left:909.03px;top:416px;font-size:12.3px;color:#fff;transform:scaleX(0.9677);transform-origin:0 0;">Done.</div>
<div class="t" style="left:911.97px;top:462px;font-size:11.5px;color:#000;transform:scaleX(1.0345);transform-origin:0 0;">Done.</div>
<div class="a" style="left:929px;top:506px;width:69px;height:17px;border:2px solid #0078d7;background:#e1e1e1"></div>
<div class="t" style="left:959.00px;top:512px;font-size:11.5px;color:#000;transform:scaleX(0.9375);transform-origin:0 0;">OK</div>
<svg class="a" style="left:997px;top:415px" width="12" height="12"><path d="M1 1 L11 11 M11 1 L1 11" stroke="#fff" stroke-width="1.1"/></svg>
<svg class="a" style="left:1360px;top:0" width="128" height="26"><path d="M15 12.5 H25" stroke="#999" stroke-width="1"/><rect x="60.5" y="7.5" width="9" height="9" fill="none" stroke="#999"/><path d="M106 7 L116 17 M116 7 L106 17" stroke="#999" stroke-width="1.1"/></svg>
<svg class="a" style="left:907px;top:86px" width="11" height="11"><path d="M0.5 0.5 L10.5 10.5 M10.5 0.5 L0.5 10.5" stroke="#777" stroke-width="1.1"/></svg>
<svg class="a" style="left:12px;top:10px" width="17" height="11"><ellipse cx="8" cy="5" rx="5" ry="4.6" fill="#101418"/><rect x="0" y="3.2" width="16" height="3.2" rx="1" fill="#1a2228"/><rect x="1" y="4.3" width="14" height="1" fill="#8fb8c0"/><path d="M5 2 L7 1" stroke="#a8d0d8" stroke-width="1"/><rect x="6" y="7.5" width="3" height="1" fill="#8fb8c0"/></svg>
<svg class="a" style="left:366px;top:8px" width="17" height="11"><ellipse cx="8" cy="5" rx="5" ry="4.6" fill="#101418"/><rect x="0" y="3.2" width="16" height="3.2" rx="1" fill="#1a2228"/><rect x="1" y="4.3" width="14" height="1" fill="#8fb8c0"/><path d="M5 2 L7 1" stroke="#a8d0d8" stroke-width="1"/><rect x="6" y="7.5" width="3" height="1" fill="#8fb8c0"/></svg>
<svg class="a" style="left:374px;top:84px" width="16" height="13"><rect x="0.5" y="0.5" width="15" height="12" fill="#f4f4f4" stroke="#9a9a9a"/><rect x="1" y="1" width="14" height="1" fill="#c8c8c8"/><defs><linearGradient id="og" x1="0" y1="0" x2="0.4" y2="1"><stop offset="0" stop-color="#3a6aa8"/><stop offset="1" stop-color="#3aa850"/></linearGradient></defs><rect x="2" y="3" width="5" height="8" fill="url(#og)"/><rect x="8" y="2" width="2" height="9" fill="#e0e0e0"/><rect x="11" y="3" width="3" height="4" fill="url(#og)"/></svg>
<svg class="a" style="left:840px;top:396px" width="32" height="34"><defs><linearGradient id="cg" x1="0" y1="0" x2="1" y2="0.3"><stop offset="0" stop-color="#d0d0d0"/><stop offset="0.5" stop-color="#e8e8e8"/><stop offset="1" stop-color="#fafafa"/></linearGradient><filter id="cs" x="-50%" y="-50%" width="200%" height="200%"><feGaussianBlur stdDeviation="2.5"/></filter></defs><path d="M11 9 L11 24.5 L15 21 L18 26.5 L22.5 23 L20 20 L24 17 Z" fill="#000" opacity="0.18" filter="url(#cs)"/><path d="M9.5 7.5 L9.5 22.5 L13.5 19 L16.5 24.5 L21 21 L18.5 18 L22.5 15 Z" fill="url(#cg)" stroke="#000" stroke-width="1.3" stroke-linejoin="round"/></svg>
</div></body></html>
